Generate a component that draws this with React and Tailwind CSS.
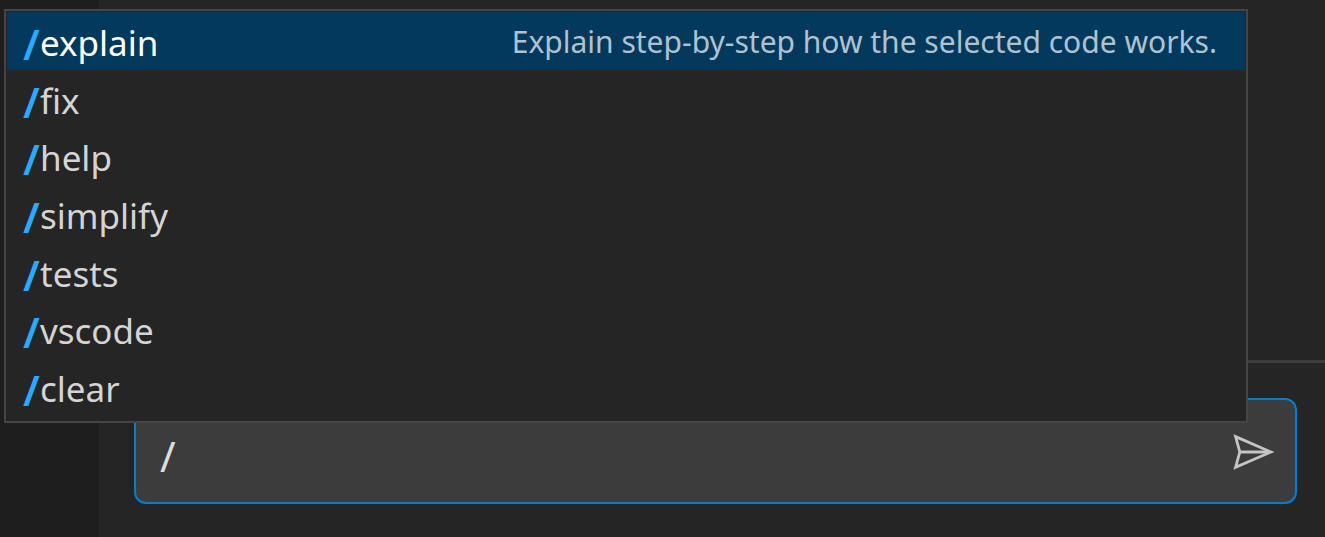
const commands = [
  { name: "explain", detail: "Explain step-by-step how the selected code works." },
  { name: "fix" },
  { name: "help" },
  { name: "simplify" },
  { name: "tests" },
  { name: "vscode" },
  { name: "clear" },
];

function SendIcon() {
  return (
    <svg viewBox="0 0 42 36" className="h-9 w-[42px]" fill="none" stroke="currentColor" aria-hidden="true">
      <path strokeWidth="2.8" d="M2.6 2.6 L38 18 L2.6 33.4 L6.8 18 Z" />
      <path strokeWidth="3" d="M6.6 18 H37" />
    </svg>
  );
}

function CommandMenu() {
  return (
    <div className="absolute top-[9px] right-[77px] left-1 border-2 border-[#454545] bg-[#252526] px-px pt-px pb-[5px]">
      <ul role="listbox" aria-label="Commands" className="grid h-[404px] grid-rows-7">
        {commands.map((command, index) => (
          <li
            key={command.name}
            role="option"
            aria-selected={index === 0}
            className="flex items-center justify-between pr-7 pl-4 text-[#d4d4d4] aria-selected:bg-[#04395e] aria-selected:text-white"
          >
            <span className="pt-1 text-[35px] leading-[52px]">
              <span className="inline-block w-[17px] align-[-4px] text-[42px] leading-none font-semibold text-[#2aaaff]">/</span>
              {command.name}
            </span>
            {command.detail && <span className="pt-0.5 text-[30px] leading-[52px] text-[#b0c2d0]">{command.detail}</span>}
          </li>
        ))}
      </ul>
    </div>
  );
}

export default function App() {
  return (
    <div className="relative flex min-h-screen bg-[#252526] font-['Noto_Sans','Open_Sans',sans-serif]">
      <aside className="w-[99px] shrink-0 bg-[#1e1e1e]" />
      <main className="flex min-w-0 flex-1 flex-col">
        <div className="flex-1" />
        <form
          className="border-t-[3px] border-[#3c3c3c] pt-[35px] pr-7 pb-[33px] pl-[35px]"
          onSubmit={(event) => event.preventDefault()}
        >
          <div className="flex h-[106px] items-center rounded-xl border-2 border-[#007fd4] bg-[#3c3c3c] pr-5 pl-6">
            <input
              type="text"
              aria-label="Message"
              defaultValue="/"
              className="min-w-0 flex-1 bg-transparent pt-2.5 text-[42px] leading-[56px] text-[#dddddd] outline-none"
            />
            <button type="submit" aria-label="Send" className="pt-0.5 text-[#c5c5c5]">
              <SendIcon />
            </button>
          </div>
        </form>
      </main>
      <CommandMenu />
    </div>
  );
}
